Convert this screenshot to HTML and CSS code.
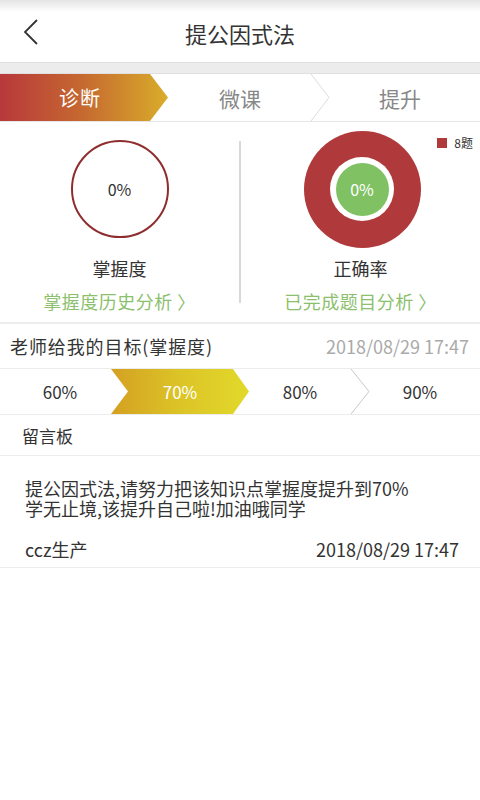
FILE: index.html
```html
<!DOCTYPE html>
<html lang="zh">
<head>
    <meta charset="UTF-8">
    <meta name="viewport" content="width=device-width, initial-scale=1.0">
    <title>提公因式法</title>
    <link rel="stylesheet" href="styles.css">
</head>
<body>
    <div class="header">
        <svg class="back" width="16" height="26" viewBox="0 0 16 26">
            <polyline points="14,1 2,13 14,25" fill="none" stroke="#333" stroke-width="1.8"/>
        </svg>
        <h1>提公因式法</h1>
    </div>
    <div class="gap"></div>

    <!-- 步骤 -->
    <div class="steps">
        <div class="step active">诊断</div>
        <div class="step">微课</div>
        <div class="step">提升</div>
        <svg class="sep" width="20" height="47" viewBox="0 0 20 47">
            <polyline points="1,0 19,23.5 1,47" fill="none" stroke="#dcdcdc" stroke-width="1"/>
        </svg>
    </div>

    <!-- 图表 -->
    <div class="charts">
        <div class="chart">
            <div class="graph"><div class="ring">0%</div></div>
            <p class="label">掌握度</p>
            <p class="link">掌握度历史分析 〉</p>
        </div>
        <div class="divider"></div>
        <div class="chart">
            <div class="graph"><div class="donut"><div class="hole"><span>0%</span></div></div></div>
            <p class="label">正确率</p>
            <p class="link">已完成题目分析 〉</p>
        </div>
        <div class="legend"><i></i>8题</div>
    </div>

    <div class="target">
        <span class="t-title">老师给我的目标(掌握度)</span>
        <span class="t-date">2018/08/29 17:47</span>
    </div>
    <div class="levels">
        <div class="lv">60%</div>
        <div class="lv on">70%</div>
        <div class="lv">80%</div>
        <div class="lv">90%</div>
        <svg class="sep2" width="20" height="45" viewBox="0 0 20 45">
            <polyline points="1,0 19,22.5 1,45" fill="none" stroke="#c8c8c8" stroke-width="1"/>
        </svg>
    </div>

    <div class="board">留言板</div>
    <div class="msg">
        <p>提公因式法,请努力把该知识点掌握度提升到70%</p>
        <p>学无止境,该提升自己啦!加油哦同学</p>
        <div class="msg-foot">
            <span>ccz生产</span>
            <span>2018/08/29 17:47</span>
        </div>
    </div>
</body>
</html>
```

FILE: styles.css
```css
*{
    margin: 0;
    padding: 0;
    box-sizing: border-box;
}

body{
    width: 480px;
    background: #fff;
    font-family: "Noto Sans CJK SC", "Liberation Sans", sans-serif;
    color: #333;
}

.header{
    height: 62px;
    position: relative;
    background: linear-gradient(#e4e4e4, #fff 12px);
    display: flex;
    align-items: center;
    justify-content: center;
}
.header h1{
    font-size: 22px;
    font-weight: normal;
    color: #333;
    margin-top: 3px;
}
.back{
    position: absolute;
    left: 23px;
    top: 19px;
}

.gap{
    height: 12px;
    background: #ececec;
    border-top: 1px solid #e0e0e0;
    border-bottom: 1px solid #e0e0e0;
}

/* 步骤 */
.steps{
    height: 48px;
    display: flex;
    position: relative;
    border-bottom: 1px solid #e6e6e6;
}
.step{
    width: 160px;
    display: flex;
    align-items: center;
    justify-content: center;
    font-size: 21px;
    color: #888;
}
.step.active{
    color: #fff;
    font-size: 20px;
    letter-spacing: 1px;
    background: linear-gradient(90deg, #b8383b, #c66a30 50%, #d9ad2a);
    clip-path: polygon(0 0, 150px 0, 168px 50%, 150px 100%, 0 100%);
    width: 168px;
    margin-right: -8px;
    padding-right: 8px;
}
.sep{
    position: absolute;
    left: 310px;
    top: 0;
}

/* 图表 */
.charts{
    height: 202px;
    display: flex;
    position: relative;
    border-bottom: 2px solid #ededed;
}
.chart{
    flex: 1;
    display: flex;
    flex-direction: column;
    align-items: center;
}
.graph{
    height: 134px;
    display: flex;
    align-items: center;
    justify-content: center;
}
.divider{
    width: 2px;
    background: #d8d8d8;
    margin: 19px 0 19px;
}
.ring{
    width: 98px;
    height: 98px;
    border: 2px solid #8e2d2d;
    border-radius: 50%;
    display: flex;
    align-items: center;
    justify-content: center;
    font-size: 16px;
    color: #333;
}
.donut{
    width: 117px;
    height: 117px;
    margin-left: 3px;
    border-radius: 50%;
    background: #b03a3b;
    display: flex;
    align-items: center;
    justify-content: center;
}
.hole{
    width: 64px;
    height: 64px;
    border-radius: 50%;
    background: #fff;
    display: flex;
    align-items: center;
    justify-content: center;
}
.hole span{
    width: 53px;
    height: 53px;
    border-radius: 50%;
    background: #80c163;
    color: #fff;
    font-size: 16px;
    display: flex;
    align-items: center;
    justify-content: center;
}
.label{
    font-size: 18px;
    line-height: 24px;
    color: #333;
}
.link{
    font-size: 18px;
    line-height: 24px;
    letter-spacing: 0.5px;
    margin-top: 9px;
    color: #8cbf6e;
}
.legend{
    position: absolute;
    right: 7px;
    top: 12px;
    font-size: 12px;
    color: #333;
    display: flex;
    align-items: center;
}
.legend i{
    width: 10px;
    height: 10px;
    background: #b03a3b;
    margin-right: 7px;
}

/* 目标 */
.target{
    height: 45px;
    display: flex;
    align-items: center;
    justify-content: space-between;
    padding: 0 11px 0 10px;
    border-bottom: 1px solid #ececec;
    font-size: 18px;
}
.t-title{
    letter-spacing: 0.9px;
}
.t-date{
    color: #aaa;
}
.levels{
    height: 46px;
    display: flex;
    position: relative;
    border-bottom: 1px solid #ececec;
}
.lv{
    flex: 1;
    display: flex;
    align-items: center;
    justify-content: center;
    font-size: 17px;
    color: #333;
}
.lv.on{
    flex: none;
    width: 138px;
    margin-left: -9px;
    margin-right: -9px;
    color: #fff;
    background: linear-gradient(90deg, #d4a022, #dcc427 50%, #e2d92b);
    clip-path: polygon(0 0, 122px 0, 138px 50%, 122px 100%, 0 100%, 17px 50%);
}
.sep2{
    position: absolute;
    left: 350px;
    top: 0;
}

.board{
    height: 41px;
    display: flex;
    align-items: center;
    padding-left: 22px;
    font-size: 17px;
    border-bottom: 1px solid #ececec;
}
.msg{
    padding: 22px 21px 8px 25px;
    border-bottom: 1px solid #ececec;
    font-size: 18px;
}
.msg p{
    line-height: 20px;
}
.msg-foot{
    display: flex;
    justify-content: space-between;
    line-height: 20px;
    margin-top: 21px;
}
```
